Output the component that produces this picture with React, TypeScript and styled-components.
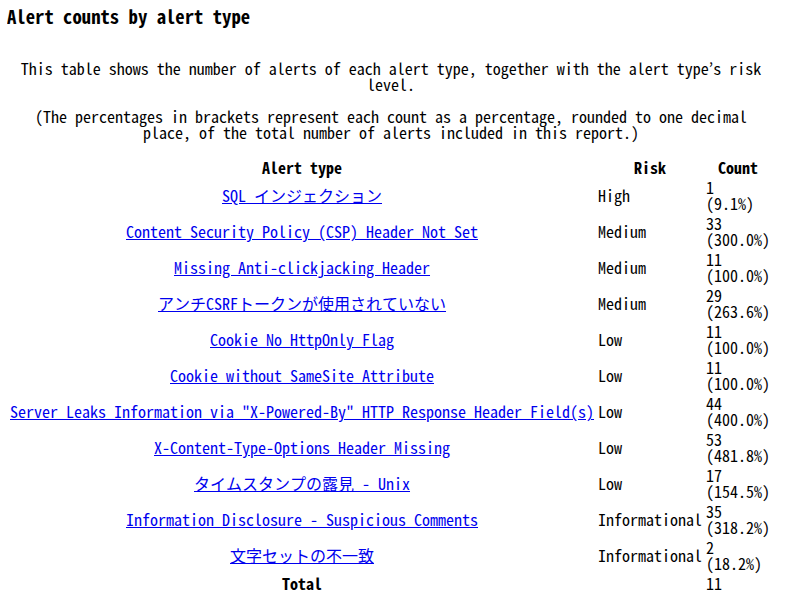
import styled, { createGlobalStyle } from "styled-components";

const GlobalStyle = createGlobalStyle`
  body {
    margin: 6px 8px 8px 7px;
    background: #ffffff;
    color: #000000;
    font-family: "Noto Sans Mono CJK JP", "Noto Sans CJK JP", monospace;
    font-size: 16px;
    line-height: 1;
  }
`;

const Section = styled.div`
  width: 768px;
`;

const Heading = styled.h3`
  font-size: 18.72px;
  font-weight: bold;
  line-height: 19px;
  margin: 0 0 35px 0;
`;

const Description = styled.p`
  text-align: center;
  margin: 0 0 16px 0;
  padding: 0 1px;
`;

const Table = styled.table`
  width: 766px;
  border-spacing: 2px;
  line-height: 16px;
`;

const HeadCell = styled.th`
  padding: 1px;
  font-weight: bold;
  text-align: center;
`;

const TypeCell = styled.td`
  padding: 1px;
  text-align: center;
  white-space: nowrap;
`;

const RiskCell = styled.td`
  padding: 1px;
  text-align: left;
  white-space: nowrap;
`;

const CountCell = styled.td`
  padding: 1px;
  text-align: left;
  white-space: nowrap;
`;

const AlertLink = styled.a`
  color: #0000ee;
  text-decoration: underline;
`;

const TotalLabel = styled.th`
  padding: 1px;
  font-weight: bold;
  text-align: center;
`;

interface AlertRow {
  name: string;
  risk: string;
  count: number;
  percent: string;
}

const rows: AlertRow[] = [
  { name: "SQL インジェクション", risk: "High", count: 1, percent: "9.1%" },
  { name: "Content Security Policy (CSP) Header Not Set", risk: "Medium", count: 33, percent: "300.0%" },
  { name: "Missing Anti-clickjacking Header", risk: "Medium", count: 11, percent: "100.0%" },
  { name: "アンチCSRFトークンが使用されていない", risk: "Medium", count: 29, percent: "263.6%" },
  { name: "Cookie No HttpOnly Flag", risk: "Low", count: 11, percent: "100.0%" },
  { name: "Cookie without SameSite Attribute", risk: "Low", count: 11, percent: "100.0%" },
  {
    name: 'Server Leaks Information via "X-Powered-By" HTTP Response Header Field(s)',
    risk: "Low",
    count: 44,
    percent: "400.0%",
  },
  { name: "X-Content-Type-Options Header Missing", risk: "Low", count: 53, percent: "481.8%" },
  { name: "タイムスタンプの露見 - Unix", risk: "Low", count: 17, percent: "154.5%" },
  { name: "Information Disclosure - Suspicious Comments", risk: "Informational", count: 35, percent: "318.2%" },
  { name: "文字セットの不一致", risk: "Informational", count: 2, percent: "18.2%" },
];

const App = () => {
  return (
    <>
      <GlobalStyle />
      <Section>
        <Heading>Alert counts by alert type</Heading>
        <Description>
          This table shows the number of alerts of each alert type, together with the alert type’s risk level.
        </Description>
        <Description>
          (The percentages in brackets represent each count as a percentage, rounded to one decimal place, of the
          total number of alerts included in this report.)
        </Description>
        <Table>
          <thead>
            <tr>
              <HeadCell>Alert type</HeadCell>
              <HeadCell>Risk</HeadCell>
              <HeadCell>Count</HeadCell>
            </tr>
          </thead>
          <tbody>
            {rows.map((row) => (
              <tr key={row.name}>
                <TypeCell>
                  <AlertLink href="#">{row.name}</AlertLink>
                </TypeCell>
                <RiskCell>{row.risk}</RiskCell>
                <CountCell>
                  {row.count}
                  <br />({row.percent})
                </CountCell>
              </tr>
            ))}
            <tr>
              <TotalLabel>Total</TotalLabel>
              <RiskCell />
              <CountCell>11</CountCell>
            </tr>
          </tbody>
        </Table>
      </Section>
    </>
  );
};

export default App;
